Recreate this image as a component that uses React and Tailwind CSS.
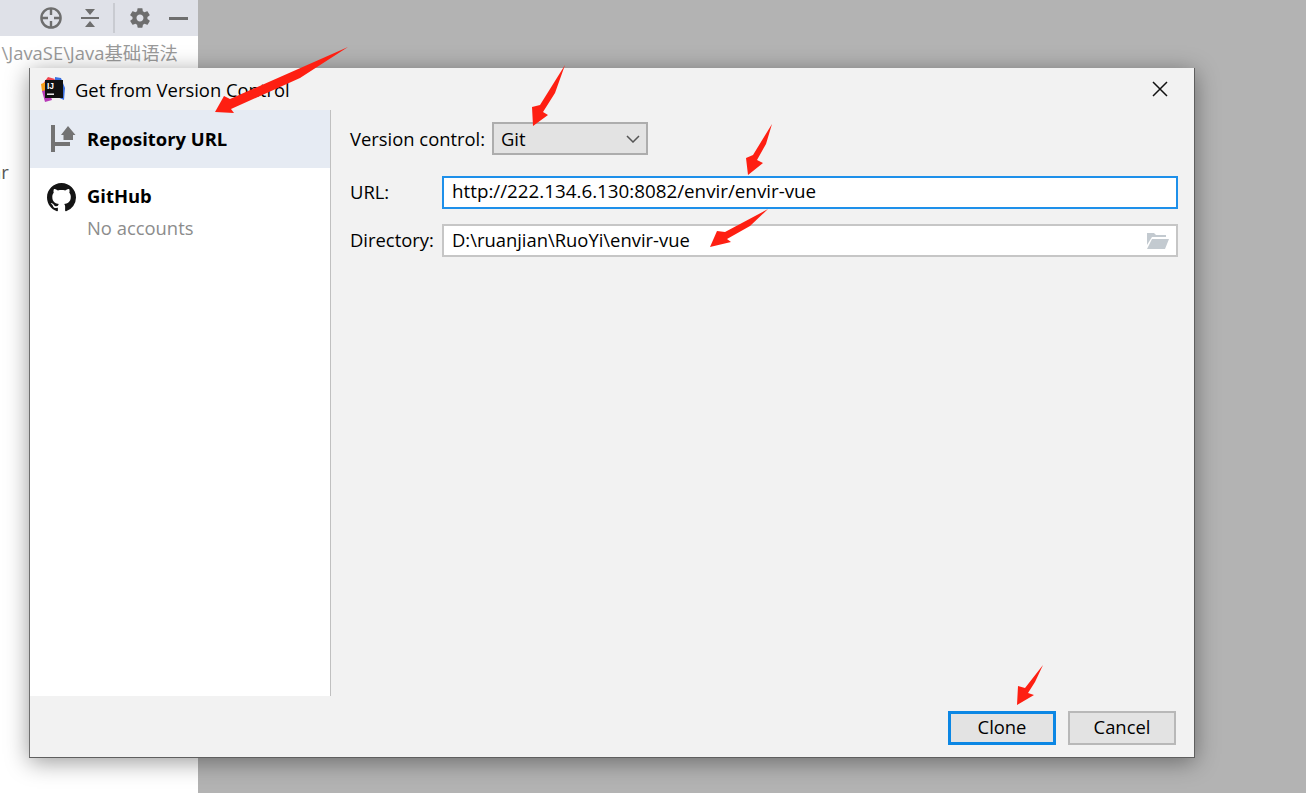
import { IoMdSettings } from 'react-icons/io'

const font = { fontFamily: '"Open Sans", "Noto Sans CJK SC", sans-serif' }

function ToolbarIcons() {
  return (
    <div className="h-[36px] bg-[#dfe1e8] flex items-center justify-end pr-[10px] shrink-0">
      <svg width="24" height="24" viewBox="0 0 24 24" fill="none" stroke="#6e6e6e" strokeWidth="2.4" className="mr-[17px]">
        <circle cx="12" cy="12" r="9.6" />
        <path d="M12 3v6M12 15v6M3 12h6M15 12h6" />
      </svg>
      <svg width="20" height="22" viewBox="0 0 20 22" fill="#6e6e6e" className="mr-[13px]">
        <rect x="1" y="10" width="18" height="2" />
        <path d="M5 2h10l-5 6zM10 14l5 6H5z" />
      </svg>
      <div className="w-[2px] h-[30px] bg-[#c9cbd1] mr-[13px]" />
      <IoMdSettings size={24} color="#6e6e6e" className="mr-[17px]" />
      <div className="w-[19px] h-[3px] bg-[#6e6e6e]" />
    </div>
  )
}

function IntellijLogo() {
  return (
    <svg width="24" height="26" viewBox="0 0 24 26">
      <polygon points="1,9 7,1 14,3 5,18 1,15" fill="#f0444f" />
      <polygon points="14,1 20,2 24,12 23,24 14,20" fill="#3a6fe0" />
      <polygon points="1,15 5,6 11,24 4,26" fill="#b83ab8" />
      <polygon points="0,8 5,6 5,14 1,15" fill="#f7a11b" />
      <rect x="4" y="4" width="18" height="18" fill="#111" />
      <text x="6" y="13" fontSize="8.5" fontWeight="700" fill="#fff" fontFamily="Liberation Sans, sans-serif">IJ</text>
      <rect x="6" y="17.5" width="7" height="1.4" fill="#fff" />
    </svg>
  )
}

function RepoIcon() {
  return (
    <svg width="26" height="28" viewBox="0 0 26 28" fill="#737373">
      <rect x="0" y="0" width="4" height="27" />
      <path d="M4 17h15v4H4zM12.500 15v-5h-2.500L17 1l7.500 9H22v5z" />
    </svg>
  )
}

function GithubIcon() {
  return (
    <svg width="29" height="29" viewBox="0 0 16 16" fill="#141414" className="mt-[2px]">
      <path d="M8 0C3.58 0 0 3.58 0 8c0 3.54 2.29 6.53 5.47 7.59.4.07.55-.17.55-.38 0-.19-.01-.82-.01-1.49-2.01.37-2.53-.49-2.69-.94-.09-.23-.48-.94-.82-1.13-.28-.15-.68-.52-.01-.53.63-.01 1.08.58 1.23.82.72 1.21 1.87.87 2.33.66.07-.52.28-.87.51-1.07-1.78-.2-3.64-.89-3.64-3.95 0-.87.31-1.59.82-2.15-.08-.2-.36-1.02.08-2.12 0 0 .67-.21 2.2.82.64-.18 1.32-.27 2-.27.68 0 1.36.09 2 .27 1.53-1.04 2.2-.82 2.2-.82.44 1.1.16 1.92.08 2.12.51.56.82 1.27.82 2.15 0 3.07-1.87 3.75-3.65 3.95.29.25.54.73.54 1.48 0 1.07-.01 1.93-.01 2.2 0 .21.15.46.55.38A8.013 8.013 0 0016 8c0-4.42-3.58-8-8-8z" />
    </svg>
  )
}

function FolderIcon() {
  return (
    <svg width="24" height="18" viewBox="0 0 24 18" fill="#c3cad0">
      <path d="M1 1h7l2 2h10v2H6L1 13z" />
      <path d="M6 7h17l-4 10H1z" />
    </svg>
  )
}

const arrows = [
  '348,47 230,99 224,96 215,112 234,113 231,109 300,78',
  '565,65 540,105 532,107 533,126 548,115 543,112 555,93',
  '772,124 753,155 746,158 748,175 763,163 757,160 766,144',
  '768,209 725,232 717,231 710,247 731,242 727,239 750,226',
  '1043,665 1025,688 1018,686 1017,705 1034,695 1028,693 1035,682',
]

export default function App() {
  return (
    <div className="relative w-[1306px] h-[793px] bg-[#b3b3b3] overflow-hidden text-black" style={font}>
      <div className="w-[198px] h-full bg-white flex flex-col">
        <ToolbarIcons />
        <div className="text-[18.4px] leading-[24px] text-[#9a9a9a] mt-[5px] whitespace-nowrap flex justify-end pr-[20px]">\JavaSE\Java基础语法</div>
        <div className="text-[18.4px] leading-[24px] text-[#555] mt-[95px] -ml-[9px]">ar</div>
      </div>

      {/* dialog */}
      <div className="absolute left-[29px] top-[68px] w-[1166px] h-[690px] bg-[#f2f2f2] border border-t-0 border-l-[#6f6f6f] border-r-[#5f5f5f] border-b-[#5f5f5f] shadow-[0_4px_22px_rgba(0,0,0,0.4)] flex flex-col">
        <div className="h-[42px] flex items-center shrink-0 pl-[11px] pr-[26px]">
          <IntellijLogo />
          <span className="ml-[10px] pt-[1px] text-[18.4px] whitespace-nowrap">Get from Version Control</span>
          <svg width="16" height="16" viewBox="0 0 16 16" stroke="#111" strokeWidth="1.500" className="ml-auto">
            <path d="M1 1l14 14M15 1L1 15" />
          </svg>
        </div>

        <div className="flex flex-1 min-h-0">
          <div className="w-[301px] bg-white border-r border-[#c0c0c0] shrink-0">
            <div className="h-[58px] bg-[#e6ebf3] flex items-center pl-[21px]">
              <RepoIcon />
              <span className="ml-[10px] text-[18.4px] font-bold">Repository URL</span>
            </div>
            <div className="flex pl-[17px] pt-[13px]">
              <GithubIcon />
              <div className="ml-[11px]">
                <div className="text-[18.4px] font-bold leading-[30px]">GitHub</div>
                <div className="text-[18.4px] text-[#8c8c8c] leading-[30px] mt-[2px]">No accounts</div>
              </div>
            </div>
          </div>

          <div className="flex-1 pl-[19px] pr-[16px] pt-[12px] text-[18.4px]">
            <div className="flex items-center h-[33px]">
              <span className="w-[142px] pt-[1px] whitespace-nowrap">Version control:</span>
              <div className="w-[156px] h-[33px] bg-[#e3e3e3] border-2 border-[#adadad] flex items-center justify-between pl-[7px] pr-[6px]">
                <span className="pt-[1px]">Git</span>
                <svg width="14" height="8" viewBox="0 0 14 8" fill="none" stroke="#555" strokeWidth="1.500">
                  <path d="M1 1l6 6 6-6" />
                </svg>
              </div>
            </div>
            <div className="flex items-center h-[33px] mt-[21px]">
              <span className="w-[92px] pb-[2px] shrink-0">URL:</span>
              <div className="flex-1 h-[33px] bg-white border-2 border-[#1e90ea] pb-[2px] flex items-center pl-[8px] text-[18.8px] whitespace-nowrap">http://222.134.6.130:8082/envir/envir-vue</div>
            </div>
            <div className="flex items-center h-[33px] mt-[15px]">
              <span className="w-[92px] pb-[2px] shrink-0">Directory:</span>
              <div className="flex-1 h-[33px] bg-white border-2 border-[#c6c6c6] flex items-center justify-between pl-[8px] pr-[6px]">
                <span className="pb-[2px]">D:\ruanjian\RuoYi\envir-vue</span>
                <FolderIcon />
              </div>
            </div>
          </div>
        </div>

        <div className="h-[61px] shrink-0 bg-[#f2f2f2] flex items-start justify-end gap-[12px] pt-[15px] pr-[18px] text-[18.4px]">
          <div className="w-[108px] h-[34px] bg-[#e3e3e3] border-[3px] border-[#0c87e4] pb-[2px] flex items-center justify-center">Clone</div>
          <div className="w-[108px] h-[34px] bg-[#e3e3e3] border-2 border-[#b8b8b8] pb-[2px] flex items-center justify-center">Cancel</div>
        </div>
      </div>

      {/* red annotation arrows drawn over the screenshot */}
      <svg className="absolute inset-0 pointer-events-none" width="1306" height="793" fill="#fe1f12">
        {arrows.map((p) => <polygon key={p} points={p} />)}
      </svg>
    </div>
  )
}
